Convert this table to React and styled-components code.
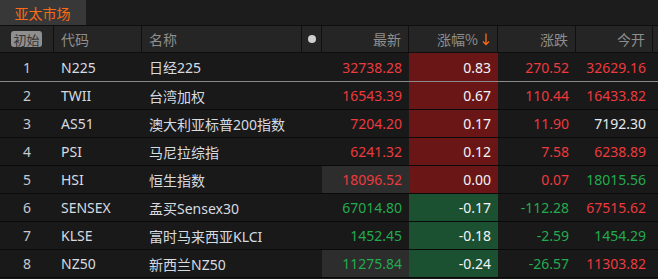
import React from "react";
import styled, { createGlobalStyle } from "styled-components";

const Global = createGlobalStyle`
  html, body { margin: 0; padding: 0; background: #181818; }
  body { font-family: "Noto Sans", "Noto Sans CJK SC", sans-serif; }
`;

const COLS = "54px 88px 160px 20px 87px 89px 78px 77px 5px";

const Page = styled.div`
  width: 658px;
  height: 279px;
  background: #181818;
  overflow: hidden;
  font-size: 14px;
`;

const TabBar = styled.div`
  display: flex;
  height: 25px;
  background: #1c1c1c;
  border-bottom: 1px solid #0e0e0e;
`;

const Tab = styled.div`
  width: 85px;
  display: flex;
  align-items: center;
  justify-content: center;
  background: ${(p) => (p.$active ? "#383838" : "transparent")};
  color: #ff6a16;
  font-family: "Noto Sans CJK SC", sans-serif;
  font-size: 14px;
  padding-right: 1px;
`;

const HeaderRow = styled.div`
  display: grid;
  grid-template-columns: ${COLS};
  height: 26px;
  background: #252525;
  border-bottom: 1px solid #0e0e0e;
`;

const HeadCell = styled.div`
  display: flex;
  align-items: center;
  justify-content: ${(p) => (p.$align === "right" ? "flex-end" : p.$align === "center" ? "center" : "flex-start")};
  padding: ${(p) => (p.$align === "right" ? "0 7px 0 0" : p.$align === "center" ? "0" : "0 0 0 7px")};
  border-right: ${(p) => (p.$last ? "none" : "1px solid #101010")};
  color: #8e8e8e;
  font-family: "Noto Sans CJK SC", sans-serif;
  font-size: 14px;
  gap: 4px;
`;

const InitButton = styled.span`
  display: inline-flex;
  align-items: center;
  justify-content: center;
  width: 31px;
  height: 16px;
  border-radius: 3px;
  background: #8f8f8f;
  color: #343434;
  font-size: 13px;
  line-height: 1;
`;

const Dot = styled.span`
  width: 8px;
  height: 8px;
  border-radius: 50%;
  background: #cfcfcf;
`;

const Row = styled.div`
  display: grid;
  grid-template-columns: ${COLS};
  height: ${(p) => (p.$selected ? "28px" : "27px")};
  background: #191919;
  border-bottom: 1px solid ${(p) => (p.$selected ? "#8a8a8a" : "#0a0a0a")};
`;

const Cell = styled.div`
  display: flex;
  align-items: center;
  justify-content: ${(p) => (p.$align === "right" ? "flex-end" : p.$align === "center" ? "center" : "flex-start")};
  padding: ${(p) => (p.$align === "right" ? "0 7px 0 0" : p.$align === "center" ? "0" : "0 0 0 7px")};
  color: ${(p) => p.$color || "#d6dbe0"};
  background: ${(p) => p.$bg || "transparent"};
  white-space: nowrap;
  font-size: 14px;
`;

const RED = "#ec3a3e";
const GREEN = "#22ab4e";
const WHITE = "#e6e9ee";

const colorOf = (v) => (v > 0 ? RED : v < 0 ? GREEN : WHITE);

const rows = [
  { n: 1, code: "N225", name: "日经225", last: "32738.28", pct: "0.83", chg: "270.52", open: "32629.16", lastC: RED, openC: RED, up: true },
  { n: 2, code: "TWII", name: "台湾加权", last: "16543.39", pct: "0.67", chg: "110.44", open: "16433.82", lastC: RED, openC: RED, up: true },
  { n: 3, code: "AS51", name: "澳大利亚标普200指数", last: "7204.20", pct: "0.17", chg: "11.90", open: "7192.30", lastC: RED, openC: WHITE, up: true },
  { n: 4, code: "PSI", name: "马尼拉综指", last: "6241.32", pct: "0.12", chg: "7.58", open: "6238.89", lastC: RED, openC: RED, up: true },
  { n: 5, code: "HSI", name: "恒生指数", last: "18096.52", pct: "0.00", chg: "0.07", open: "18015.56", lastC: RED, openC: GREEN, up: true, flash: true },
  { n: 6, code: "SENSEX", name: "孟买Sensex30", last: "67014.80", pct: "-0.17", chg: "-112.28", open: "67515.62", lastC: GREEN, openC: RED, up: false },
  { n: 7, code: "KLSE", name: "富时马来西亚KLCI", last: "1452.45", pct: "-0.18", chg: "-2.59", open: "1454.29", lastC: GREEN, openC: GREEN, up: false },
  { n: 8, code: "NZ50", name: "新西兰NZ50", last: "11275.84", pct: "-0.24", chg: "-26.57", open: "11303.82", lastC: GREEN, openC: RED, up: false, flash: true },
];

const SortArrow = () => (
  <svg width="8" height="14" viewBox="0 0 8 14">
    <path d="M4 1.5 V12.5 M1 9.5 L4 12.5 L7 9.5" stroke="#ff6a16" strokeWidth="1.3" fill="none" />
  </svg>
);

export default function App() {
  return (
    <Page>
      <Global />
      <TabBar>
        <Tab $active>亚太市场</Tab>
      </TabBar>
      <HeaderRow>
        <HeadCell $align="center"><InitButton>初始</InitButton></HeadCell>
        <HeadCell>代码</HeadCell>
        <HeadCell>名称</HeadCell>
        <HeadCell $align="center"><Dot /></HeadCell>
        <HeadCell $align="right">最新</HeadCell>
        <HeadCell $align="right">涨幅%<SortArrow /></HeadCell>
        <HeadCell $align="right">涨跌</HeadCell>
        <HeadCell $align="right">今开</HeadCell>
        <HeadCell $last />
      </HeaderRow>
      {rows.map((r) => (
        <Row key={r.n} $selected={r.n === 1}>
          <Cell $align="center" $color="#c4cad2">{r.n}</Cell>
          <Cell>{r.code}</Cell>
          <Cell>{r.name}</Cell>
          <Cell />
          <Cell $align="right" $color={r.lastC} $bg={r.flash ? "#2d2d2d" : undefined}>{r.last}</Cell>
          <Cell $align="right" $color="#f2f4f7" $bg={r.up ? "#6b1616" : "#1b5131"}>{r.pct}</Cell>
          <Cell $align="right" $color={colorOf(parseFloat(r.chg))}>{r.chg}</Cell>
          <Cell $align="right" $color={r.openC}>{r.open}</Cell>
          <Cell />
        </Row>
      ))}
    </Page>
  );
}
